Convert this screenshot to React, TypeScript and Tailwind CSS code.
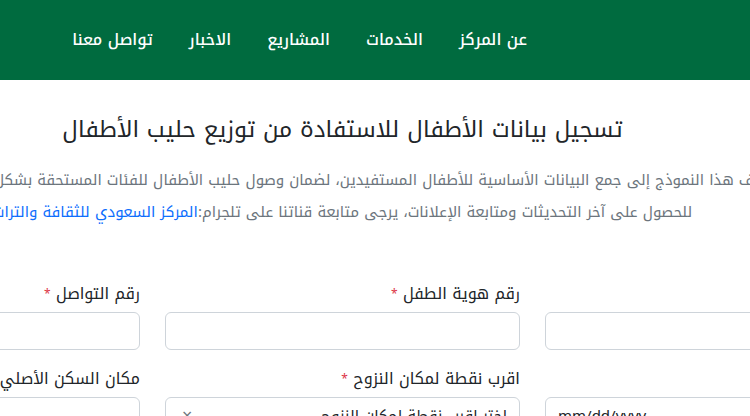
import React from "react";

const font = { fontFamily: '"Noto Kufi Arabic", "Noto Sans Arabic", "DejaVu Sans", sans-serif' };

function Label({ text }: { text: string }) {
  return (
    <div className="h-6 leading-6 text-[16px] text-[#212529] mb-[6px] whitespace-nowrap">
      {text} <span className="text-[#dc3545] text-[12px] align-top">*</span>
    </div>
  );
}

function Box({ children }: { children?: React.ReactNode }) {
  return (
    <div className="h-[38px] rounded-[6px] border border-[#ced4da] bg-white flex items-center px-3 text-[15px] text-[#212529] overflow-hidden">
      {children}
    </div>
  );
}

export default function App() {
  const nav = ["عن المركز", "الخدمات", "المشاريع", "الاخبار", "تواصل معنا"];
  return (
    <div dir="rtl" style={font} className="w-[750px] h-[416px] overflow-hidden bg-white">
      <nav className="h-20 bg-[#006b3f] flex items-center pr-[223px] gap-[36px]">
        {nav.map((n) => (
          <span key={n} className="text-white text-[16px] font-medium whitespace-nowrap">
            {n}
          </span>
        ))}
      </nav>
      <div className="w-[1115px] mr-[-150px]">
        <h1 className="mt-[34px] text-center text-[23px] leading-8 text-[#212529] whitespace-nowrap">
          تسجيل بيانات الأطفال للاستفادة من توزيع حليب الأطفال
        </h1>
        <div className="mt-[18px] text-center text-[15px] leading-8 text-[#6c757d] whitespace-nowrap">
          <p>
            يهدف هذا النموذج إلى جمع البيانات الأساسية للأطفال المستفيدين، لضمان وصول حليب الأطفال للفئات المستحقة بشكل عادل ومنظم.
          </p>
          <p>
            للحصول على آخر التحديثات ومتابعة الإعلانات، يرجى متابعة قناتنا على تلجرام:
            <span className="text-[#0d6efd]">المركز السعودي للثقافة والتراث</span>
          </p>
        </div>
        <div className="mt-[54px] grid grid-cols-3 gap-x-[25px] gap-y-[17px]">
          <div>
            <Label text="اسم الطفل" />
            <Box />
          </div>
          <div>
            <Label text="رقم هوية الطفل" />
            <Box />
          </div>
          <div>
            <Label text="رقم التواصل" />
            <Box />
          </div>
          <div>
            <Label text="تاريخ الميلاد" />
            <Box>
              <span dir="ltr" className="w-full text-left">mm/dd/yyyy</span>
            </Box>
          </div>
          <div>
            <Label text="اقرب نقطة لمكان النزوح" />
            <Box>
              <span className="flex-1 whitespace-nowrap">اختر اقرب نقطة لمكان النزوح</span>
              <span className="text-[#6c757d] text-[18px] ml-1">×</span>
            </Box>
          </div>
          <div>
            <Label text="مكان السكن الأصلي" />
            <Box />
          </div>
        </div>
      </div>
    </div>
  );
}
